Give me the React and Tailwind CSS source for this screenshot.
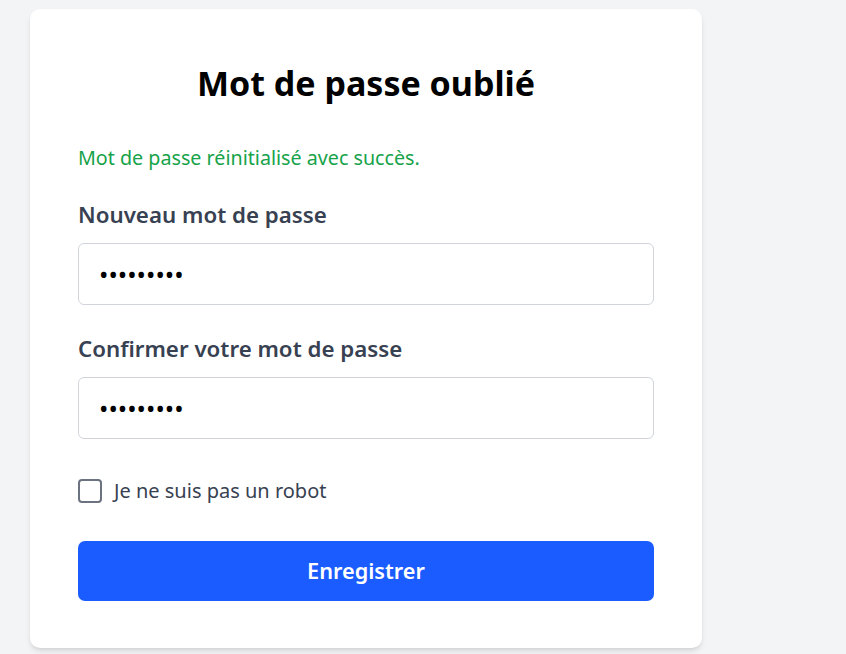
import { useState } from 'react';

export default function App() {
  const [password, setPassword] = useState('motdepass');
  const [confirm, setConfirm] = useState('motdepass');
  const [notRobot, setNotRobot] = useState(false);

  const handleSubmit = (e) => {
    e.preventDefault();
  };

  return (
    <div className="min-h-screen bg-[#f3f4f6] pt-[9px] pl-[30px]" style={{ fontFamily: '"Noto Sans", "Open Sans", sans-serif' }}>
      <form
        onSubmit={handleSubmit}
        className="w-[672px] bg-white rounded-[10px] shadow-md px-12 pt-12 pb-[47px]"
      >
        <h1 className="text-[34px] leading-[52px] font-bold text-center text-black">Mot de passe oublié</h1>

        <p className="mt-[35px] text-[19.7px] leading-[28px] text-[#16a34a]">Mot de passe réinitialisé avec succès.</p>

        <label className="block mt-[28px] text-[22.3px] leading-[30px] font-semibold text-[#374151]">Nouveau mot de passe</label>
        <input
          type="password"
          value={password}
          onChange={(e) => setPassword(e.target.value)}
          className="block w-full mt-[13px] h-[62px] px-5 border border-[#d1d5db] rounded-[6px] text-[25px] text-black focus:outline-none"
        />

        <label className="block mt-[29px] text-[22.3px] leading-[30px] font-semibold text-[#374151]">Confirmer votre mot de passe</label>
        <input
          type="password"
          value={confirm}
          onChange={(e) => setConfirm(e.target.value)}
          className="block w-full mt-[13px] h-[62px] px-5 border border-[#d1d5db] rounded-[6px] text-[25px] text-black focus:outline-none"
        />

        <label className="mt-[40px] flex items-center gap-3 h-6 cursor-pointer">
          <input
            type="checkbox"
            checked={notRobot}
            onChange={(e) => setNotRobot(e.target.checked)}
            className="appearance-none w-6 h-6 border-2 border-[#6b7280] rounded-[4px] bg-white checked:bg-[#1a5cff]"
          />
          <span className="text-[20px] text-[#374151]">Je ne suis pas un robot</span>
        </label>

        <button
          type="submit"
          className="block w-full mt-[38px] h-[60px] bg-[#1a5cff] rounded-[7px] text-white text-[21.7px] font-semibold"
        >
          Enregistrer
        </button>
      </form>
    </div>
  );
}
